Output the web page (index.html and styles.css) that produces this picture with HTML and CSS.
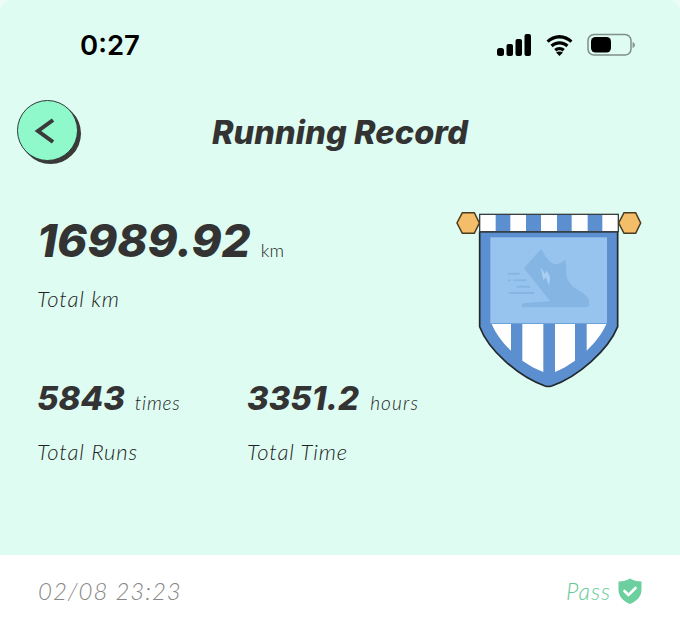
FILE: index.html
```html
<!DOCTYPE html>
<html lang="en">
<head>
<meta charset="utf-8">
<title>Running Record</title>
<link rel="stylesheet" href="styles.css">
</head>
<body>
<main class="screen">
  <section class="card">
    <div class="status">
      <span class="clock">0:27</span>
      <div class="status-icons">
        <svg class="signal" width="35" height="22" viewBox="0 0 35 22"><rect x="0" y="14" width="7" height="8" rx="2.500"/><rect x="9.500" y="10" width="6.500" height="12" rx="2"/><rect x="18.500" y="5" width="6.500" height="17" rx="2"/><rect x="27.500" y="0" width="6.500" height="22" rx="2"/></svg>
        <svg class="wifi" width="29" height="21" viewBox="2 1 26 21"><path d="M15 4.500c4.200 0 8 1.600 10.800 4.300l2.200-2.400C24.600 3.100 20 1 15 1S5.400 3.100 2 6.400l2.200 2.400C7 6.100 10.800 4.500 15 4.500z"/><path d="M15 10.500c2.600 0 5 1 6.800 2.700l2.200-2.400C21.600 8.600 18.500 7.300 15 7.300s-6.600 1.300-9 3.500l2.200 2.400c1.800-1.700 4.200-2.700 6.800-2.700z"/><path d="M15 16.200c1.200 0 2.300.5 3.100 1.200l2.200-2.400c-1.400-1.300-3.300-2-5.300-2s-3.900.7-5.300 2l2.200 2.400c.8-.7 1.900-1.200 3.100-1.200z"/><path d="M15 22l3.400-3.400c-.9-.7-2.100-1.100-3.400-1.100s-2.500.4-3.400 1.100z"/></svg>
        <svg class="battery" width="48" height="24" viewBox="0 0 48 24"><rect x="1" y="1.500" width="43" height="20.500" rx="6" fill="none" stroke="#7f8f89" stroke-width="1.500"/><rect x="4" y="4" width="20" height="15.500" rx="4.500" fill="#000"/><path d="M45.500 9v6c1.500-.5 2.500-1.500 2.500-3s-1-2.500-2.500-3z" fill="#8b9a94"/></svg>
      </div>
    </div>
    <header class="topbar">
      <div class="back">
        <svg width="20" height="26" viewBox="0 0 20 26"><path d="M19 2 L4 13 L19 24" fill="none" stroke="#3a3a3a" stroke-width="4"/></svg>
      </div>
      <h1 class="title">Running Record</h1>
    </header>
    <div class="content">
      <div class="stats">
        <div class="stat">
          <div class="value-row"><span class="value value-lg">16989.92</span><span class="unit unit-km">km</span></div>
          <div class="label label-first">Total km</div>
        </div>
        <div class="stat-row">
          <div class="stat stat-runs">
            <div class="value-row"><span class="value">5843</span><span class="unit">times</span></div>
            <div class="label">Total Runs</div>
          </div>
          <div class="stat">
            <div class="value-row"><span class="value">3351.2</span><span class="unit unit-hours">hours</span></div>
            <div class="label">Total Time</div>
          </div>
        </div>
      </div>
      <svg class="badge" width="210" height="200" viewBox="0 0 630 600">
        <path d="M104 95 V380 C130 450 220 530 300 558 Q310 561 320 558 C400 530 490 450 518 380 V95 Z" fill="#5b8fcf" stroke="#22282c" stroke-width="5"/>
        <rect x="136" y="112" width="350" height="258" fill="#97c4ee"/>
        <g fill="#85b6e3">
          <path d="M237 205 L285 150 Q292 145 295 160 L315 185 Q330 196 340 192 L362 180 L365 230 Q372 250 390 265 L415 280 Q433 292 433 312 Q433 322 420 322 H238 Q229 322 230 315 Q231 310 240 309 L315 303 Z"/>
          <rect x="188" y="218" width="37" height="6" rx="2"/>
          <rect x="188" y="238" width="10" height="6" rx="2"/>
          <rect x="205" y="238" width="40" height="6" rx="2"/>
          <rect x="215" y="257" width="40" height="6" rx="2"/>
          <rect x="190" y="276" width="78" height="6" rx="2"/>
        </g>
        <path d="M287 202 L300 222 L305 212 L315 230 L312 258 L303 232 L295 240 Z" fill="#a9d0f2"/>
        <g fill="#fff">
          <path d="M140 372 H198 V452 C172 428 152 400 140 372 Z"/>
          <path d="M232 372 H295 V516 C274 508 252 496 232 482 Z"/>
          <path d="M330 372 H390 V482 C370 496 350 508 330 516 Z"/>
          <path d="M425 372 H484 C472 400 450 428 425 452 Z"/>
        </g>
        <rect x="104" y="43" width="416" height="52" fill="#fff" stroke="#3a3f42" stroke-width="4"/>
        <g fill="#5b8fcf">
          <rect x="152" y="45" width="44" height="48"/>
          <rect x="243" y="45" width="45" height="48"/>
          <rect x="336" y="45" width="44" height="48"/>
          <rect x="428" y="45" width="44" height="48"/>
        </g>
        <path d="M52 38 H88 L103 69 L88 100 H52 L36 69 Z" fill="#f4bd69" stroke="#4a3a20" stroke-width="4.500"/>
        <path d="M537 38 H572 L587 69 L572 100 H537 L521 69 Z" fill="#f4bd69" stroke="#4a3a20" stroke-width="4.500"/>
      </svg>
    </div>
  </section>
  <footer class="footer">
    <span class="date">02/08 23:23</span>
    <div class="pass">
      <span class="pass-text">Pass</span>
      <svg width="24" height="26" viewBox="0 0 24 26"><path d="M12 .5 C15 2.500 19 3.500 23.500 3.500 V12 C23.500 19 18 23.500 12 26 C6 23.500 .5 19 .5 12 V3.500 C5 3.500 9 2.500 12 .5 Z" fill="#6ccf9e"/><path d="M6.500 13 L10.500 17 L17.500 10" fill="none" stroke="#fff" stroke-width="2.600" stroke-linecap="round" stroke-linejoin="round"/></svg>
    </div>
  </footer>
</main>
</body>
</html>
```
FILE: styles.css
```css
* { box-sizing: border-box; }
html, body { margin: 0; padding: 0; background: #fff; }
body { width: 680px; height: 620px; overflow: hidden; font-family: "Lato", "Liberation Sans", sans-serif; color: #333; }
.screen { display: flex; flex-direction: column; height: 620px; background: #ecfdf8; }
.card { height: 555px; background: #defcf2; border-radius: 12px 12px 0 0; }
.status { display: flex; justify-content: space-between; align-items: center; height: 32px; padding: 0 46px 0 80px; position: relative; top: 29px; }
.clock { font-family: "Inter", "Liberation Sans", sans-serif; font-weight: 600; font-size: 27.500px; line-height: 34px; color: #000; }
.status-icons { display: flex; align-items: center; gap: 13px; margin-right: -1px; }
.signal, .wifi { fill: #000; }
.topbar { position: relative; display: flex; justify-content: center; align-items: center; height: 66px; margin-top: 67px; }
.back { position: absolute; left: 17px; top: 1px; width: 61px; height: 61px; border-radius: 50%; background: #90f9cc; border: 1.500px solid #2f3a36; box-shadow: 3px 3px 0 #3a3a38; display: flex; align-items: center; justify-content: center; }
.back svg { margin-right: 8px; }
.title { margin: 2px 0 0; font-family: "Inter", "Liberation Sans", sans-serif; font-size: 32.500px; line-height: 40px; font-weight: 800; font-style: italic; color: #333; letter-spacing: .1px; }
.content { display: flex; justify-content: space-between; padding: 35px 25px 0 37px; }
.stats { display: flex; flex-direction: column; margin-top: 13px; }
.value-row { display: flex; align-items: baseline; }
.value { font-family: "Inter", "Liberation Sans", sans-serif; font-size: 33px; line-height: 40px; font-weight: 800; font-style: italic; color: #333; }
.value-lg { font-size: 45.500px; line-height: 56px; }
.unit { font-size: 19px; font-weight: 300; font-style: italic; margin-left: 10px; letter-spacing: .8px; color: #222; }
.unit-km { font-style: normal; font-size: 18px; margin-left: 10px; letter-spacing: .4px; }
.unit-hours { letter-spacing: 1.200px; margin-left: 11px; }
.label { font-size: 22px; line-height: 28px; font-weight: 300; font-style: italic; color: #222; letter-spacing: .9px; margin-top: 20px; }
.label-first { margin-top: 16px; }
.stat-row { display: flex; margin-top: 65px; }
.stat-runs { width: 210px; }
.badge { flex: none; }
.footer { display: flex; justify-content: space-between; align-items: center; height: 65px; padding: 6px 38px 0 38px; background: #fff; }
.date { font-size: 24px; font-weight: 300; font-style: italic; color: #888; letter-spacing: 1px; }
.pass { display: flex; align-items: center; gap: 7px; }
.pass-text { font-size: 23px; font-weight: 300; font-style: italic; color: #63cb98; letter-spacing: 1px; margin-left: 1px; }
```
